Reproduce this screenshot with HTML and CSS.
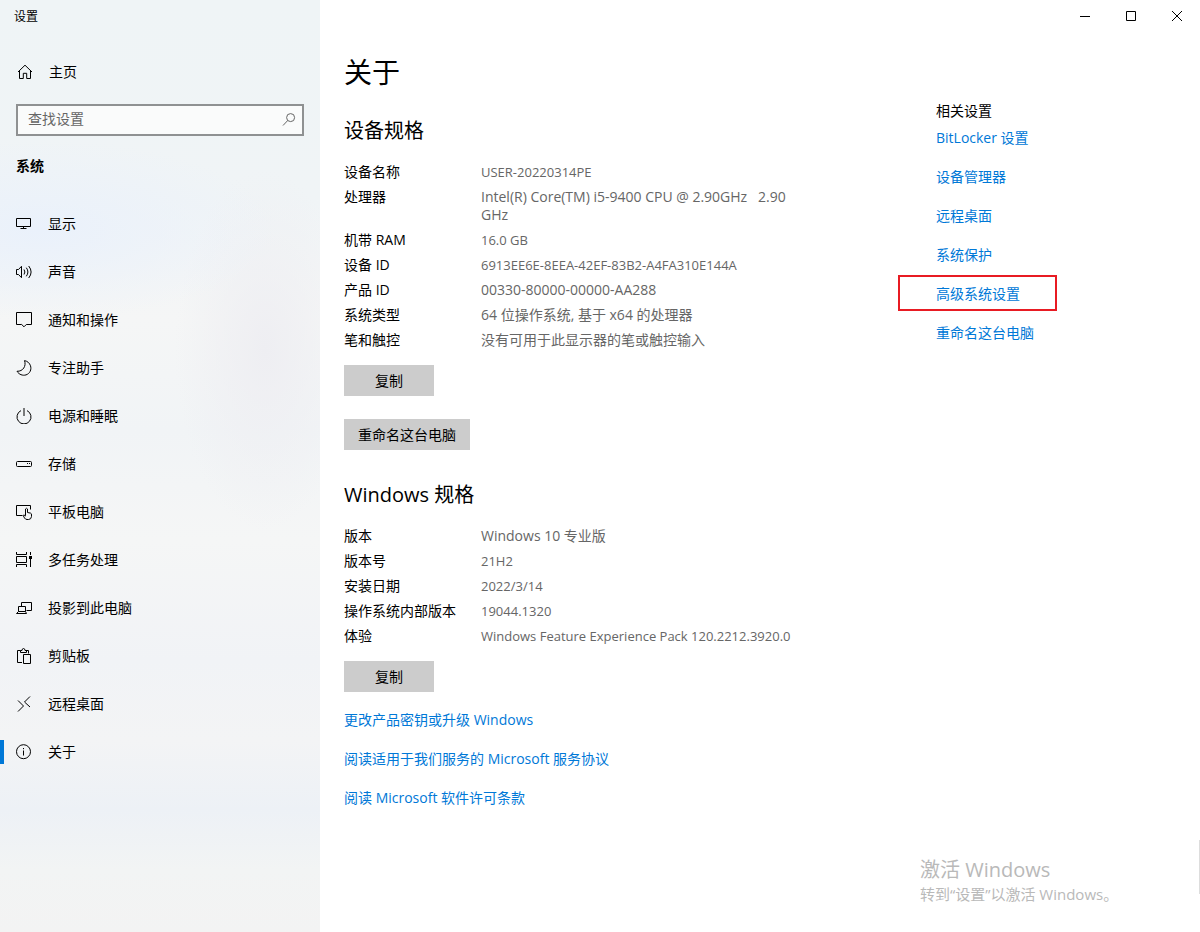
FILE: index.html
```html
<!DOCTYPE html>
<html lang="zh-CN">
<head>
    <meta charset="UTF-8">
    <meta name="viewport" content="width=device-width, initial-scale=1.0">
    <title>设置</title>
    <link rel="stylesheet" href="styles.css">
</head>
<body>
    <div class="window">
        <aside class="sidebar">
            <div class="window-title">设置</div>
            <a class="home" href="#">
                <svg class="icon" viewBox="0 0 16 16"><path d="M1 8 8 1.2 15 8M2.5 6.7v7.8h3.8V9.3h3.4v5.2h3.8V6.7"/></svg>
                主页
            </a>
            <form class="search">
                <input type="text" id="search" placeholder="查找设置" aria-label="查找设置">
                <button type="button" aria-label="搜索">
                    <svg class="icon" viewBox="0 0 16 16"><circle cx="9.6" cy="5.6" r="4"/><path d="M6.8 8.4 2 13.5"/></svg>
                </button>
            </form>
            <h2 class="group-title">系统</h2>
            <nav class="nav">
                <a href="#">
                    <svg class="icon" viewBox="0 0 16 16"><path d="M.5 2.5h14v8H.5zM7.5 10.5v2M4.5 12.5h6"/></svg>
                    显示
                </a>
                <a href="#">
                    <svg class="icon" viewBox="0 0 16 16"><path d="M.5 5.5h2L5.5 2.3v11.4l-3-3.2h-2zM8 5.5q1.8 2.5 0 5M10.3 3.7q3.2 4.3 0 8.6M12.7 2q4.8 6 0 12"/></svg>
                    声音
                </a>
                <a href="#">
                    <svg class="icon" viewBox="0 0 16 16"><path d="M.5.5h15v12h-5.2L8 14.8 5.7 12.5H.5z"/></svg>
                    通知和操作
                </a>
                <a href="#">
                    <svg class="icon" viewBox="0 0 16 16"><path d="M8.5.6C10.5 6 7 11.5 1 11.3 3 14.5 6.6 15.9 10 14.9 14 13.6 15.7 9.5 14.5 5.800 13.6 3 11.500 1.200 8.500.6z"/></svg>
                    专注助手
                </a>
                <a href="#">
                    <svg class="icon" viewBox="0 0 16 16"><path d="M5 2.6a7 7 0 1 0 6 0M8 0v8"/></svg>
                    电源和睡眠
                </a>
                <a href="#">
                    <svg class="icon" viewBox="0 0 16 16"><rect x=".5" y="5.5" width="15" height="5" rx="1"/><path d="M11 7.5h1M13 7.5h1"/></svg>
                    存储
                </a>
                <a href="#">
                    <svg class="icon" viewBox="0 0 16 16"><path d="M6.5 11.5h-6v-10h14v4M9.500 11.500V5q1-1.500 2 0v3.500l3 .6q1.200.4 1 1.900v1.500q-.3 3-3 3h-1.500q-1.500 0-2.500-1.500l-1.300-2.500q.3-1.400 2.300.5z"/></svg>
                    平板电脑
                </a>
                <a href="#">
                    <svg class="icon" viewBox="0 0 16 16"><path d="M.5 0v2.5h10V0M.5 4.500h10v6H.5zM.5 15v-2.500h10V15M14.500 0v3M14.500 7v8"/><path class="solid" d="M13 4h3v3h-3z"/></svg>
                    多任务处理
                </a>
                <a href="#">
                    <svg class="icon" viewBox="0 0 16 16"><path d="M5.500 6.500v-4h10v8h-5M2.500 6.500h7v5h-7zM2.500 11.500l-2 2h10l-1-2"/></svg>
                    投影到此电脑
                </a>
                <a href="#">
                    <svg class="icon" viewBox="0 0 16 16"><path d="M6 14.500H1.500v-12h3M10 2.500h2.500v3M4.500 4.500v-2h1.500q0-2 1.500-2t1.500 2h1.500v2zM7.500 6.500h7v9h-7z"/></svg>
                    剪贴板
                </a>
                <a href="#">
                    <svg class="icon" viewBox="0 0 16 16"><path d="M2 4.500 7.500 10 2 15.500M14 .5 8.500 6l5.500 5"/></svg>
                    远程桌面
                </a>
                <a class="active" href="#" aria-current="page">
                    <svg class="icon" viewBox="0 0 16 16"><circle cx="7.500" cy="7.700" r="7"/><path d="M7.500 6.500v5M7.500 4v1.200"/></svg>
                    关于
                </a>
            </nav>
        </aside>

        <main class="main">
            <div class="window-controls">
                <button type="button" aria-label="最小化"><svg class="icon" viewBox="0 0 16 16"><path d="M3 8.500h10"/></svg></button>
                <button type="button" aria-label="最大化"><svg class="icon" viewBox="0 0 16 16"><path d="M3.500 3.500h9v9h-9z"/></svg></button>
                <button type="button" aria-label="关闭"><svg class="icon" viewBox="0 0 16 16"><path d="M3 3l10 10M13 3 3 13"/></svg></button>
            </div>
            <div class="columns">
                <div class="content">
                    <h1>关于</h1>
                    <section>
                        <h2>设备规格</h2>
                        <table class="specs">
                            <tr><th scope="row">设备名称</th><td class="latin">USER-20220314PE</td></tr>
                            <tr><th scope="row">处理器</th><td>Intel(R) Core(TM) i5-9400 CPU @ 2.90GHz&nbsp;&nbsp; 2.90 GHz</td></tr>
                            <tr><th scope="row">机带 RAM</th><td class="latin">16.0 GB</td></tr>
                            <tr><th scope="row">设备 ID</th><td class="latin">6913EE6E-8EEA-42EF-83B2-A4FA310E144A</td></tr>
                            <tr><th scope="row">产品 ID</th><td>00330-80000-00000-AA288</td></tr>
                            <tr><th scope="row">系统类型</th><td>64 位操作系统, 基于 x64 的处理器</td></tr>
                            <tr><th scope="row">笔和触控</th><td>没有可用于此显示器的笔或触控输入</td></tr>
                        </table>
                        <div class="buttons">
                            <button type="button" class="btn">复制</button>
                            <button type="button" class="btn">重命名这台电脑</button>
                        </div>
                    </section>
                    <section>
                        <h2>Windows 规格</h2>
                        <table class="specs">
                            <tr><th scope="row">版本</th><td>Windows 10 专业版</td></tr>
                            <tr><th scope="row">版本号</th><td class="latin">21H2</td></tr>
                            <tr><th scope="row">安装日期</th><td class="latin">2022/3/14</td></tr>
                            <tr><th scope="row">操作系统内部版本</th><td class="latin">19044.1320</td></tr>
                            <tr><th scope="row">体验</th><td class="latin">Windows Feature Experience Pack 120.2212.3920.0</td></tr>
                        </table>
                        <div class="buttons">
                            <button type="button" class="btn">复制</button>
                        </div>
                    </section>
                    <div class="links">
                        <a href="#">更改产品密钥或升级 Windows</a>
                        <a href="#">阅读适用于我们服务的 Microsoft 服务协议</a>
                        <a href="#">阅读 Microsoft 软件许可条款</a>
                    </div>
                </div>
                <aside class="related">
                    <h3>相关设置</h3>
                    <div class="links">
                        <a href="#">BitLocker 设置</a>
                        <a href="#">设备管理器</a>
                        <a href="#">远程桌面</a>
                        <a href="#">系统保护</a>
                        <a class="marked" href="#">高级系统设置</a>
                        <a href="#">重命名这台电脑</a>
                    </div>
                </aside>
            </div>
            <div class="watermark">
                <p class="watermark-title">激活 Windows</p>
                <p>转到“设置”以激活 Windows。</p>
            </div>
            <div class="edge"></div>
        </main>
    </div>
</body>
</html>
```
FILE: styles.css
```css
*,
*::before,
*::after {
    box-sizing: border-box;
}
body {
    margin: 0;
    font-family: "Open Sans", "Noto Sans CJK SC", sans-serif;
    font-size: 14px;
    line-height: 18px;
    color: #000;
    background-color: #fff;
}
h1, h2, h3, p {
    margin: 0;
    font-weight: normal;
}
a {
    color: #0078d7;
    text-decoration: none;
}
button {
    font: inherit;
    color: inherit;
    border: none;
    padding: 0;
}
.window {
    display: flex;
    min-height: 100vh;
}
.icon {
    width: 16px;
    height: 16px;
    flex: none;
    fill: none;
    stroke: currentColor;
    stroke-width: 1;
}
.icon .solid {
    fill: currentColor;
    stroke: none;
}

/* sidebar */
.sidebar {
    width: 320px;
    flex: none;
    background:
        radial-gradient(ellipse 240px 90px at 40px 230px, #eaf1fb, transparent),
        radial-gradient(ellipse 90px 180px at 265px 350px, #eeeef2, transparent),
        linear-gradient(#eff4f6, #f0f4f6 200px, #f5f6f6 320px, #f1f4f6 430px, #f5f6f6 540px, #f1f3f6 660px, #f3f4f5 740px, #edf1f6 810px, #f2f4f4 870px, #f3f3f3);
}
.window-title {
    padding-left: 14px;
    font-size: 12px;
    line-height: 34px;
}
.home {
    display: flex;
    align-items: center;
    gap: 16px;
    height: 48px;
    margin-top: 14px;
    padding-left: 17px;
    color: #000;
}
.search {
    display: flex;
    align-items: center;
    height: 32px;
    margin: 8px 16px 0;
    border: 2px solid #8f9192;
    background-color: #fafbfb;
}
.search input {
    flex: 1;
    min-width: 0;
    height: 28px;
    padding: 0 10px 4px;
    border: none;
    outline: none;
    background: none;
    font: inherit;
}
.search input::placeholder {
    color: #666;
    opacity: 1;
}
.search button {
    display: flex;
    padding-right: 5px;
    background: none;
    color: #666;
}
.group-title {
    margin: 21px 16px 0;
    font-size: 14px;
    font-weight: bold;
}
.nav {
    display: flex;
    flex-direction: column;
    margin-top: 25px;
}
.nav a {
    display: flex;
    align-items: center;
    gap: 16px;
    height: 48px;
    padding-left: 16px;
    color: #000;
}
.nav .active {
    position: relative;
}
.nav .active::before {
    content: "";
    position: absolute;
    left: 0;
    top: 12px;
    width: 4px;
    height: 24px;
    background-color: #0078d7;
}
.home,
.nav a {
    line-height: 20px;
}

/* main area */
.main {
    position: relative;
    flex: 1;
}
.window-controls {
    display: flex;
    justify-content: flex-end;
}
.window-controls button {
    display: flex;
    align-items: center;
    justify-content: center;
    width: 46px;
    height: 32px;
    background: none;
}
.columns {
    display: grid;
    grid-template-columns: 1fr 264px;
    padding-left: 24px;
}
.content {
    max-width: 452px;
}
h1 {
    margin-top: 20px;
    font-size: 28px;
    line-height: 40px;
}
h3 {
    font-size: 14px;
}
.content h2 {
    font-size: 20px;
    line-height: 28px;
}
section {
    padding-top: 25px;
}
section + section {
    padding-top: 31px;
}
.specs {
    width: 100%;
    margin-top: 18px;
    border-collapse: collapse;
}
.specs th,
.specs td {
    height: 25px;
    padding: 0 0 7px;
    vertical-align: top;
    text-align: left;
    font-weight: normal;
}
.specs th {
    width: 137px;
    white-space: nowrap;
}
.specs td {
    color: #666;
}
.specs .latin {
    font-size: 13px;
}
.buttons {
    display: flex;
    flex-direction: column;
    align-items: flex-start;
    gap: 23px;
    margin-top: 9px;
}
.btn {
    min-width: 90px;
    height: 31px;
    padding: 0 14px;
    background-color: #ccc;
}
.links {
    display: flex;
    flex-direction: column;
    align-items: flex-start;
    gap: 21px;
}
.content > .links {
    margin-top: 19px;
}
.related {
    padding-top: 70px;
}
.related .links {
    margin-top: 9px;
}
.marked {
    position: relative;
}
.marked::after {
    content: "";
    position: absolute;
    left: -38px;
    top: -10px;
    width: 159px;
    height: 36px;
    border: 2px solid #e81b23;
}

/* activation notice in the corner */
.watermark {
    position: absolute;
    right: 80px;
    bottom: 28px;
    width: 200px;
    color: #b9b9b9;
    font-size: 15px;
    line-height: 20px;
    white-space: nowrap;
}
.watermark-title {
    font-size: 20px;
    line-height: 28px;
}
.edge {
    position: absolute;
    right: 0;
    bottom: 38px;
    width: 1px;
    height: 54px;
    background-color: #ddd;
}
```
